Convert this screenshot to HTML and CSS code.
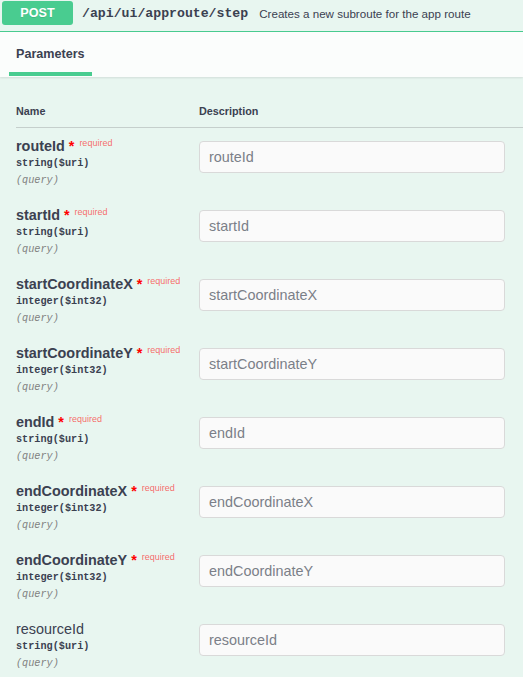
FILE: index.html
```html
<!DOCTYPE html>
<html>
<head>
<meta charset="utf-8">
<link rel="stylesheet" href="styles.css">
</head>
<body>
<div class="opblock">
  <div class="summary">
    <span class="method">POST</span>
    <span class="path">/api/ui/approute/step</span>
    <span class="summary-desc">Creates a new subroute for the app route</span>
  </div>
  <div class="section-header">
    <span class="tab">Parameters</span>
  </div>
  <div class="table">
    <div class="thead">
      <div class="th">Name</div>
      <div class="th">Description</div>
    </div>
    <div class="row">
      <div class="pcell">
        <div class="pname req">routeId<span class="star">&nbsp;*</span><span class="reqtxt">required</span></div>
        <div class="ptype">string($uri)</div>
        <div class="pin">(query)</div>
      </div>
      <div class="dcell"><input class="field" placeholder="routeId"></div>
    </div>
    <div class="row">
      <div class="pcell">
        <div class="pname req">startId<span class="star">&nbsp;*</span><span class="reqtxt">required</span></div>
        <div class="ptype">string($uri)</div>
        <div class="pin">(query)</div>
      </div>
      <div class="dcell"><input class="field" placeholder="startId"></div>
    </div>
    <div class="row">
      <div class="pcell">
        <div class="pname req">startCoordinateX<span class="star">&nbsp;*</span><span class="reqtxt">required</span></div>
        <div class="ptype">integer($int32)</div>
        <div class="pin">(query)</div>
      </div>
      <div class="dcell"><input class="field" placeholder="startCoordinateX"></div>
    </div>
    <div class="row">
      <div class="pcell">
        <div class="pname req">startCoordinateY<span class="star">&nbsp;*</span><span class="reqtxt">required</span></div>
        <div class="ptype">integer($int32)</div>
        <div class="pin">(query)</div>
      </div>
      <div class="dcell"><input class="field" placeholder="startCoordinateY"></div>
    </div>
    <div class="row">
      <div class="pcell">
        <div class="pname req">endId<span class="star">&nbsp;*</span><span class="reqtxt">required</span></div>
        <div class="ptype">string($uri)</div>
        <div class="pin">(query)</div>
      </div>
      <div class="dcell"><input class="field" placeholder="endId"></div>
    </div>
    <div class="row">
      <div class="pcell">
        <div class="pname req">endCoordinateX<span class="star">&nbsp;*</span><span class="reqtxt">required</span></div>
        <div class="ptype">integer($int32)</div>
        <div class="pin">(query)</div>
      </div>
      <div class="dcell"><input class="field" placeholder="endCoordinateX"></div>
    </div>
    <div class="row">
      <div class="pcell">
        <div class="pname req">endCoordinateY<span class="star">&nbsp;*</span><span class="reqtxt">required</span></div>
        <div class="ptype">integer($int32)</div>
        <div class="pin">(query)</div>
      </div>
      <div class="dcell"><input class="field" placeholder="endCoordinateY"></div>
    </div>
    <div class="row">
      <div class="pcell">
        <div class="pname">resourceId</div>
        <div class="ptype">string($uri)</div>
        <div class="pin">(query)</div>
      </div>
      <div class="dcell"><input class="field" placeholder="resourceId"></div>
    </div>
  </div>
</div>
</body>
</html>
```
FILE: styles.css
```css
html, body {
  margin: 0;
  padding: 0;
  background: #e8f6f0;
  overflow: hidden;
}
body {
  font-family: "Liberation Sans", Arial, sans-serif;
  color: #3b4151;
}
.summary {
  display: flex;
  align-items: center;
  box-sizing: border-box;
  height: 32px;
  padding: 0 0 0 2px;
  border-bottom: 1px solid #49cc90;
}
.method {
  display: flex;
  align-items: center;
  justify-content: center;
  width: 71px;
  height: 24px;
  margin-top: -5px;
  background: #49cc90;
  color: #fff;
  font-weight: 700;
  font-size: 12.6px;
  border-radius: 3px;
  text-shadow: 0 1px 0 rgba(0,0,0,.1);
}
.path {
  margin-left: 9px;
  margin-top: -5px;
  font-family: "Liberation Mono", "DejaVu Sans Mono", monospace;
  font-weight: 700;
  font-size: 13.2px;
  color: #3b4151;
}
.summary-desc {
  margin-left: 11px;
  margin-top: -5px;
  font-size: 11.6px;
  color: #3b4151;
}
.section-header {
  height: 45px;
  box-sizing: border-box;
  padding: 12px 0 0 9px;
  background: rgba(255,255,255,.8);
  box-shadow: 0 1px 2px rgba(0,0,0,.1);
  position: relative;
}
.tab {
  display: inline-block;
  padding: 0 7px 10px 7px;
  line-height: 16px;
  font-size: 12.6px;
  font-weight: 700;
  border-bottom: 4px solid #49cc90;
}
.table {
  padding: 27px 0 0 16px;
}
.thead {
  display: grid;
  grid-template-columns: 183px 1fr;
  border-bottom: 1px solid #c5cfcc;
  padding-bottom: 9px;
}
.th {
  font-size: 10.8px;
  font-weight: 700;
  line-height: 14px;
}
.row {
  display: grid;
  grid-template-columns: 183px 1fr;
  height: 69px;
}
.pcell {
  padding-top: 9px;
}
.pname {
  font-size: 14.4px;
  line-height: 18px;
  white-space: nowrap;
}
.pname.req {
  font-weight: 700;
}
.star {
  color: #f00;
}
.reqtxt {
  font-size: 9px;
  font-weight: 400;
  line-height: 1;
  vertical-align: 5px;
  padding-left: 5px;
  color: rgba(255,0,0,.6);
}
.ptype {
  padding-top: 2px;
  font-family: "Liberation Mono", "DejaVu Sans Mono", monospace;
  font-size: 10.2px;
  font-weight: 700;
  line-height: 14px;
}
.pin {
  margin-top: 3px;
  font-family: "Liberation Mono", "DejaVu Sans Mono", monospace;
  font-size: 10.2px;
  font-style: italic;
  line-height: 14px;
  color: #808080;
}
.dcell {
  padding-top: 13px;
}
.field {
  display: block;
  box-sizing: border-box;
  width: 306px;
  height: 32px;
  margin: 0;
  padding: 0 9px;
  border: 1px solid #d9d9d9;
  border-radius: 4px;
  background: #fafafa;
  font-family: "Liberation Sans", Arial, sans-serif;
  font-size: 14.4px;
  color: #3b4151;
  outline: none;
}
.field::placeholder {
  color: #7b7f88;
}
```
